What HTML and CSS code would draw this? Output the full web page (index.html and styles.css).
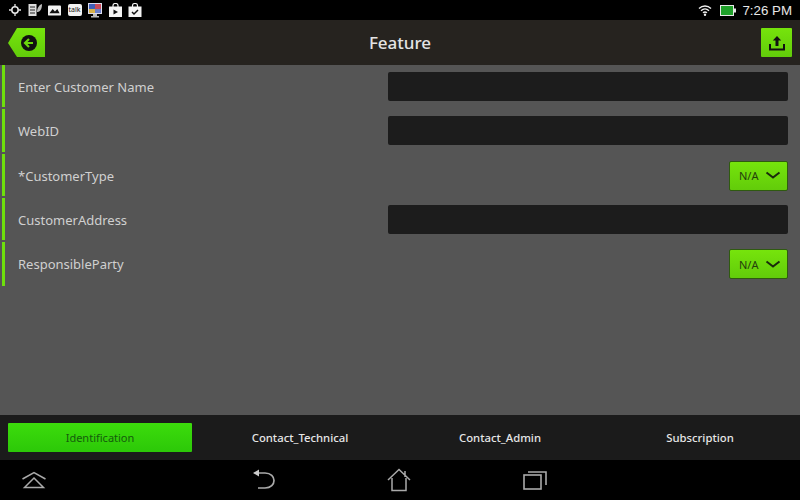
FILE: index.html
```html
<!DOCTYPE html>
<html>
<head>
  <meta charset="UTF-8">
  <title>Feature</title>
  <link rel="stylesheet" href="styles.css">
</head>
<body>
  <div class="screen">
    <div class="status-bar">
      <div class="status-icons">
        <svg width="12" height="12" viewBox="0 0 12 12"><circle cx="6" cy="6" r="3.200" fill="none" stroke="#e8e8e8" stroke-width="1.500"/><path d="M6 0v2.500M6 9.500v2.500M0 6h2.500M9.500 6H12" stroke="#e8e8e8" stroke-width="1.300"/></svg>
        <svg width="14" height="14" viewBox="0 0 14 14"><rect x="0.500" y="1" width="8" height="12" fill="#ddd"/><path d="M2 4h5M2 7h5M2 10h5" stroke="#222" stroke-width="1"/><path d="M9 9c0-4 2-7 5-8 0 4-1 7-4 8z" fill="#bbb"/></svg>
        <svg width="13" height="11" viewBox="0 0 14 11"><rect width="14" height="11" rx="1" fill="#f2f2f2"/><path d="M1.500 8.500 5 4l2.500 2.500L10 4l2.500 4.500z" fill="#111"/></svg>
        <div class="talk-icon">talk</div>
        <svg width="14" height="15" viewBox="0 0 14 15"><rect width="14" height="11" fill="#dcdcec"/><rect x="1" y="1" width="6" height="5" fill="#3f5fb8"/><rect x="7" y="1" width="6" height="5" fill="#c84a5a"/><rect x="1" y="6" width="6" height="4" fill="#d8b24a"/><rect x="7" y="6" width="6" height="4" fill="#6a7fc8"/><path d="M5 11h4v2h2v1.500H3V13h2z" fill="#bbb"/></svg>
        <svg width="13" height="14" viewBox="0 0 13 14"><path d="M0 3.500h13V14H0z" fill="#f4f4f4"/><path d="M4 4V2.500a2.500 2 0 0 1 5 0V4" fill="none" stroke="#f4f4f4" stroke-width="1.200"/><path d="M4.500 6.500 9 9l-4.500 2.500z" fill="#111"/></svg>
        <svg width="14" height="14" viewBox="0 0 13 14"><path d="M0 3.500h13V14H0z" fill="#f4f4f4"/><path d="M4 4V2.500a2.500 2 0 0 1 5 0V4" fill="none" stroke="#f4f4f4" stroke-width="1.200"/><path d="m3.500 9 2 2 4-4" fill="none" stroke="#111" stroke-width="1.500"/></svg>
      </div>
      <div class="status-right">
        <svg width="14" height="12" viewBox="0 0 14 12"><path d="M1 4.500c3.500-3.400 8.500-3.400 12 0M3 6.700c2.400-2.200 5.600-2.200 8 0M5 8.800c1.200-1 2.800-1 4 0" fill="none" stroke="#f0f0f0" stroke-width="1.400"/><circle cx="7" cy="10.700" r="1.200" fill="#f0f0f0"/></svg>
        <svg width="16" height="11" viewBox="0 0 16 11"><rect x="0.500" y="0.500" width="13" height="10" fill="#1fa02a" stroke="#e8e8e8"/><rect x="14" y="3.500" width="2" height="4" fill="#e8e8e8"/></svg>
        <span class="clock">7:26 PM</span>
      </div>
    </div>

    <div class="title-bar">
      <button class="back-button">
        <svg width="38" height="30" viewBox="0 0 38 30">
          <defs>
            <linearGradient id="backFill" x1="0" y1="0" x2="0" y2="1"><stop offset="0" stop-color="#76e40c"/><stop offset="1" stop-color="#62cc0a"/></linearGradient>
          </defs>
          <path d="M9 0h28v29H9L0 15z" fill="url(#backFill)"/><circle cx="21" cy="15" r="8" fill="#111"/><path d="M25 15h-7M21 11l-4 4 4 4" fill="none" stroke="#6ad60c" stroke-width="2.200"/>
        </svg>
      </button>
      <h1>Feature</h1>
      <button class="share-button">
        <svg width="16" height="16" viewBox="0 0 16 16"><path d="M8 1 3.800 5.500h2.700V11h3V5.500h2.700z" fill="#111"/><path d="M1 9v5.500h14V9" fill="none" stroke="#111" stroke-width="2"/></svg>
      </button>
    </div>

    <div class="form-list">
      <div class="form-row">
        <label>Enter Customer Name</label>
        <div class="text-field"></div>
      </div>
      <div class="form-row">
        <label>WebID</label>
        <div class="text-field"></div>
      </div>
      <div class="form-row">
        <label>*CustomerType</label>
        <div class="select-field">N/A<svg width="16" height="9" viewBox="0 0 16 9"><path d="m1.500 1.500 6.500 5 6.500-5" fill="none" stroke="#1a2a0c" stroke-width="2"/></svg></div>
      </div>
      <div class="form-row">
        <label>CustomerAddress</label>
        <div class="text-field"></div>
      </div>
      <div class="form-row">
        <label>ResponsibleParty</label>
        <div class="select-field">N/A<svg width="16" height="9" viewBox="0 0 16 9"><path d="m1.500 1.500 6.500 5 6.500-5" fill="none" stroke="#1a2a0c" stroke-width="2"/></svg></div>
      </div>
    </div>

    <div class="tab-bar">
      <div class="tab active">Identification</div>
      <div class="tab">Contact_Technical</div>
      <div class="tab">Contact_Admin</div>
      <div class="tab">Subscription</div>
    </div>

    <div class="nav-bar">
      <svg class="nav-recent-apps" width="26" height="18" viewBox="0 0 26 18"><path d="M1.500 8 13 1.500 24.500 8M3.500 16.500 13 7l9.500 9.500z" fill="none" stroke="#aaa" stroke-width="1.500"/></svg>
      <svg class="nav-back" width="24" height="22" viewBox="0 0 24 22"><path d="M3 4h10c12 0 12 15 0 15H6" fill="none" stroke="#aaa" stroke-width="1.700"/><path d="M1 4 7 0.500v7z" fill="#ccc"/></svg>
      <svg class="nav-home" width="24" height="24" viewBox="0 0 24 24"><path d="M1 12 12 1.500 23 12M5 10v12.500h14V10M18 3v6" fill="none" stroke="#aaa" stroke-width="1.500"/></svg>
      <svg class="nav-tasks" width="24" height="20" viewBox="0 0 24 20"><rect x="1" y="5" width="17" height="14" fill="none" stroke="#aaa" stroke-width="1.600"/><path d="M5 2h18v13" fill="none" stroke="#aaa" stroke-width="1.600"/></svg>
    </div>
  </div>
</body>
</html>
```

FILE: styles.css
```css
:root {
  --green: #6ee00c;
  --green-fill: linear-gradient(#76e40c, #62cc0a);
  --text-light: #d0d0d0;
  --field-dark: #1c1c1c;
}

body {
  margin: 0;
  background: #000;
  font-family: 'Noto Sans', 'Open Sans', sans-serif;
}

.screen {
  width: 800px;
  height: 500px;
  display: flex;
  flex-direction: column;
  overflow: hidden;
}

.status-bar {
  height: 20px;
  flex: none;
  background: #000;
  display: flex;
  justify-content: space-between;
  align-items: center;
  padding: 0 8px 0 9px;
}

.status-icons {
  display: flex;
  align-items: center;
  gap: 6.500px;
}

.talk-icon {
  width: 14px;
  height: 12px;
  background: #f2f2f2;
  border-radius: 2px;
  color: #111;
  font-size: 7px;
  line-height: 12px;
  text-align: center;
}

.status-right {
  display: flex;
  align-items: center;
  gap: 8px;
}

.clock {
  color: #e8e8e8;
  font-family: 'Liberation Sans', sans-serif;
  font-size: 13.300px;
  margin-left: -2px;
}

.title-bar {
  height: 45px;
  flex: none;
  background: #26231f;
  display: grid;
  grid-template-columns: 1fr auto 1fr;
  align-items: center;
  padding: 0 8px;
}

.title-bar h1 {
  margin: 0;
  color: #e4e4e4;
  font-size: 17px;
  font-weight: 500;
}

.back-button, .share-button {
  padding: 0;
  border: none;
  background: none;
  display: flex;
  align-items: center;
  justify-content: center;
}

.back-button {
  width: 38px;
  height: 30px;
}

.share-button {
  width: 31px;
  height: 29px;
  justify-self: end;
  background: var(--green-fill);
  border-radius: 1px;
}

.form-list {
  flex: 1;
  background: #555;
  display: flex;
  flex-direction: column;
}

.form-row {
  height: 44.300px;
  box-sizing: border-box;
  margin-left: 2px;
  padding: 0 12px 1px 13px;
  border-left: 3px solid var(--green);
  display: flex;
  justify-content: space-between;
  align-items: center;
  position: relative;
}

/* small break in the green edge between two rows */
.form-row + .form-row::before {
  content: '';
  position: absolute;
  left: -3px;
  top: -2px;
  width: 3px;
  height: 2px;
  background: #555;
}

.form-row label {
  color: var(--text-light);
  font-size: 13px;
  margin-top: 1px;
}

.text-field {
  width: 400px;
  height: 29px;
  background: var(--field-dark);
  border-radius: 2px;
}

.select-field {
  width: 59px;
  height: 30px;
  margin-top: 1px;
  box-sizing: border-box;
  background: var(--green-fill);
  border: 1px solid #2f5a10;
  border-radius: 2px;
  color: #24400c;
  font-size: 11px;
  display: flex;
  align-items: center;
  gap: 7px;
  padding-left: 9px;
}

.tab-bar {
  height: 45px;
  flex: none;
  background: #1b1b1b;
  display: grid;
  grid-template-columns: repeat(4, 1fr);
  align-items: center;
}

.tab {
  color: #e6e6e6;
  font-size: 11.300px;
  font-weight: 500;
  text-align: center;
}

.tab.active {
  margin: 0 8px;
  height: 29px;
  line-height: 29px;
  background: linear-gradient(#3cdc0c, #2cc808);
  border-radius: 1px;
  color: #145c0c;
  font-size: 11px;
  font-weight: 400;
}

.nav-bar {
  height: 40px;
  flex: none;
  background: #000;
  display: flex;
  align-items: center;
  padding-left: 21px;
}

.nav-back {
  margin-left: 205px;
}

.nav-home {
  margin-left: 111px;
}

.nav-tasks {
  margin-left: 112px;
}
```
